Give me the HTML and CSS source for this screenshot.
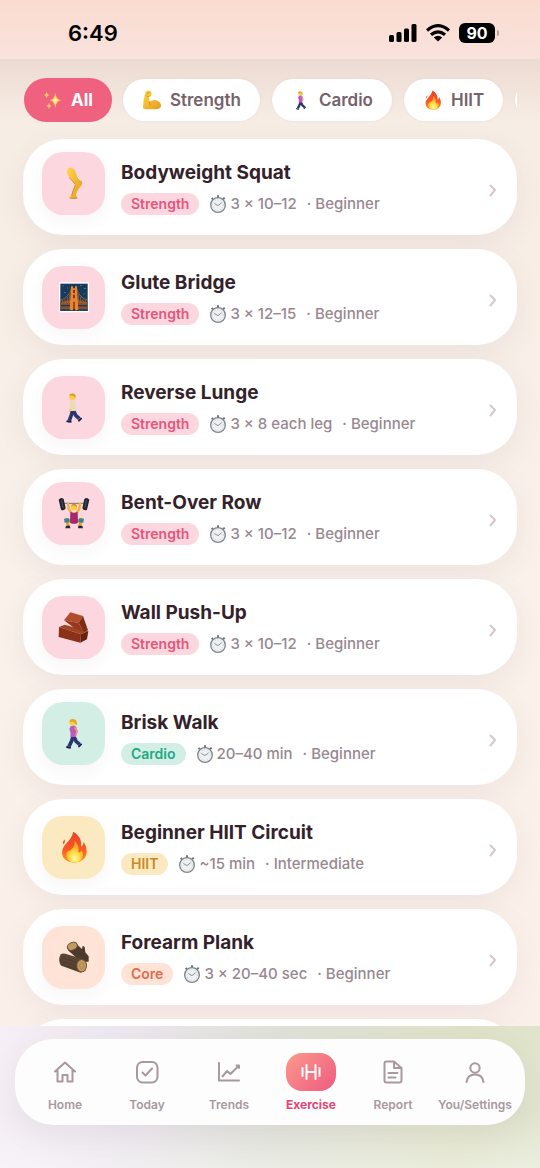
FILE: index.html
```html
<!DOCTYPE html>
<html lang="en">

<head>
    <meta charset="UTF-8">
    <meta name="viewport" content="width=device-width, initial-scale=1.0">
    <title>Exercise</title>
    <link rel="stylesheet" href="styles.css">
</head>

<body>
    <!-- shared icons -->
    <svg class="sprite" aria-hidden="true">
        <defs>
            <linearGradient id="skin" x1="0" y1="0" x2="1" y2="1">
                <stop offset="0" stop-color="#ffd84a" />
                <stop offset="1" stop-color="#e59a1c" />
            </linearGradient>
            <linearGradient id="flame" x1="0" y1="0" x2="0" y2="1">
                <stop offset="0" stop-color="#e8402a" />
                <stop offset=".6" stop-color="#fb5a24" />
                <stop offset="1" stop-color="#ff9a1f" />
            </linearGradient>
            <radialGradient id="glow" cx=".5" cy=".8" r=".6">
                <stop offset="0" stop-color="#fffbb0" />
                <stop offset=".5" stop-color="#ffdc3c" />
                <stop offset="1" stop-color="#ff9d2a" />
            </radialGradient>
        </defs>
        <symbol id="spark" viewBox="0 0 60 60">
            <path fill="#ffd45a" d="M37 8Q39 28 54 31Q39 34 37 54Q34 34 20 31Q34 28 37 8Z" />
            <path fill="#ffc46a" d="M11 5Q12 13 19 15Q12 17 11 25Q9 17 3 15Q9 13 11 5ZM18 38Q19 46 26 48Q19 50 18 57Q17 50 10 48Q17 46 18 38Z" />
            <path fill="#fff0a8" d="M37 20Q38 29 46 31Q38 33 37 42Q36 33 28 31Q36 29 37 20Z" />
        </symbol>
        <symbol id="arm" viewBox="0 0 60 60">
            <path fill="url(#skin)" d="M11 5Q18 -1 26 4Q31 9 27 17Q22 22 20 19Q21 28 23 35Q33 27 43 31Q58 36 57 49Q55 58 40 58L10 58Q2 58 3 50Q4 25 11 5Z" />
            <path fill="none" stroke="#c98313" stroke-width="2.5" stroke-linecap="round" d="M15 10Q20 12 22 7M21 20Q15 22 13 17M23 36Q21 42 25 45" />
        </symbol>
        <symbol id="woman" viewBox="0 0 96 96">
            <path fill="none" stroke="#2c3470" stroke-width="11" stroke-linejoin="round" d="M46 56L41 72L33 88M47 57L55 74L65 82" />
            <path stroke="#1d2148" stroke-width="6" stroke-linecap="round" d="M27 90L36 92M63 88L69 82" />
            <path fill="#b75cb8" d="M38 28Q50 22 56 32L54 60L37 60Q39 45 34 36Z" />
            <path fill="none" stroke="#f58d98" stroke-width="5" stroke-linecap="round" stroke-linejoin="round" d="M51 33L58 43L54 54" />
            <circle cx="43" cy="17" r="9" fill="#ffcf3f" />
            <path fill="#e9a51e" d="M34 12Q38 3 49 7Q58 11 57 23Q50 25 49 15L35 14Z" />
        </symbol>
        <symbol id="man" viewBox="0 0 96 96">
            <path fill="none" stroke="#2c3470" stroke-width="11" stroke-linejoin="round" d="M44 58L40 72L34 89M46 58L53 73L64 83" />
            <path stroke="#171c40" stroke-width="6" stroke-linecap="round" d="M28 91L38 92M63 89L69 83" />
            <path fill="#eadcb4" d="M37 28Q48 24 53 34L53 60L36 60L34 42Z" />
            <path fill="none" stroke="#f2c34a" stroke-width="4" stroke-linecap="round" d="M38 55L35 61" />
            <circle cx="43" cy="18" r="9" fill="#ffc93c" />
            <path fill="#d99a1b" d="M33 13Q38 5 48 8Q55 11 52 21L47 14Z" />
        </symbol>
        <symbol id="fire" viewBox="0 0 96 96">
            <path fill="url(#flame)" d="M46 2Q42 20 26 36Q12 50 12 66Q14 92 48 95Q84 92 86 62Q86 46 77 32Q76 44 70 47Q72 16 46 2ZM20 25Q13 32 15 40Q23 36 20 25Z" />
            <path fill="url(#glow)" d="M50 30Q52 44 40 55Q31 64 31 58Q23 66 25 76Q30 94 49 94Q72 93 75 74Q76 65 71 58Q67 67 61 63Q66 44 50 30Z" />
        </symbol>
        <symbol id="leg" viewBox="0 0 96 96">
            <path fill="url(#skin)" d="M27 11Q31 0 42 2Q52 7 55 23Q59 37 71 43Q74 49 71 54Q59 66 54 81Q53 88 59 93Q48 97 33 94Q33 89 40 87Q44 71 52 54Q46 44 34 31Q25 20 27 11Z" />
            <path fill="none" stroke="#c27a12" stroke-width="2" stroke-linecap="round" d="M52 54Q44 71 41 86M34 32L50 50M38 94L56 94" />
        </symbol>
        <symbol id="bridge" viewBox="0 0 96 96">
            <rect x="3" y="4" width="90" height="90" fill="#fff" />
            <rect x="7" y="8" width="82" height="82" fill="#163a5c" />
            <path fill="#8a4f2c" d="M7 64L40 56L56 56L89 64V84H7Z" />
            <path fill="#163a5c" d="M9 72H38V76H9ZM58 72H87V76H58Z" />
            <path fill="none" stroke="#c8742c" stroke-width="2" d="M7 58Q32 50 42 21M54 21Q64 50 89 58M14 57V68M21 54V68M28 48V66M34 41V66M62 41V66M68 48V66M75 54V68M82 57V68" />
            <path fill="#ee8429" d="M39 16H45V22H51V16H57L61 88H51V62H45V88H35Z" />
            <path fill="#7c3a1b" d="M45 27H51V36H45ZM45 41H51V52H45Z" />
            <path fill="#254862" d="M7 84H34V90H7ZM62 84H89V90H62Z" />
            <path fill="#fff" d="M14 14h2v2h-2zM27 20h2v2h-2zM68 13h2v2h-2zM80 22h2v2h-2zM20 34h2v2h-2zM77 38h2v2h-2z" />
        </symbol>
        <symbol id="lifter" viewBox="0 0 96 96">
            <path stroke="#6d7780" stroke-width="3" d="M8 19L88 19" />
            <path fill="none" stroke="#f2b52e" stroke-width="7" stroke-linecap="round" stroke-linejoin="round" d="M30 20L32 36L40 47M66 20L64 36L56 47" />
            <path fill="none" stroke="#e0a025" stroke-width="9" stroke-linejoin="round" d="M43 75L26 67L31 88M53 75L70 67L65 88" />
            <path fill="#a5286f" d="M37 44Q48 50 59 44L60 77Q48 84 36 77Z" />
            <circle cx="48" cy="31" r="9" fill="#ffc63a" />
            <path fill="#d68e18" d="M39 28Q40 20 49 20Q58 22 57 30L48 25Z" />
            <path fill="#2f8795" d="M18 65L33 64L34 76L20 77ZM63 64L78 65L76 77L62 76Z" />
            <path fill="#20242e" d="M2 8Q9 -1 17 6L23 34Q18 43 9 38ZM94 8Q87 -1 79 6L73 34Q78 43 87 38Z" />
            <path fill="#4a5360" d="M9 9L12 8L17 33L14 34ZM87 9L84 8L79 33L82 34Z" />
            <path fill="#22283a" d="M22 94L24 86H36L37 94ZM60 94L61 86H73L75 94Z" />
        </symbol>
        <symbol id="brick" viewBox="0 0 96 96">
            <path fill="#a34426" d="M3 48L20 41L91 60L69 70Z" />
            <path fill="#8a3219" d="M3 48L69 70L67 95L2 78Z" />
            <path fill="#642310" d="M69 70L91 60L87 85L67 95Z" />
            <path fill="#b24b2b" d="M37 4L75 15L62 36L18 28Z" />
            <path fill="#7c2c15" d="M75 15L90 58L77 62L62 36Z" />
            <path fill="#96391d" d="M18 28L62 36L77 62L54 55Z" />
        </symbol>
        <symbol id="wood" viewBox="0 0 96 96">
            <path fill="#4e3a2d" d="M48 2L72 24L74 14L80 18L82 34L92 46V62L68 62L30 28Z" />
            <ellipse cx="43" cy="16" rx="17" ry="13" fill="#6a4a30" transform="rotate(-25 43 16)" />
            <ellipse cx="43" cy="16" rx="14" ry="10" fill="#c09a5e" transform="rotate(-25 43 16)" />
            <path fill="#594334" d="M8 40Q14 36 22 38L74 54Q88 62 86 76Q82 92 68 95L10 74Q2 66 4 50Z" />
            <path fill="none" stroke="#45342a" stroke-width="2" d="M10 49L55 64M7 59L54 76M12 70L58 88" />
            <ellipse cx="71" cy="74" rx="16" ry="20" fill="#7a5536" />
            <ellipse cx="71" cy="74" rx="13" ry="17" fill="#c49c63" />
            <ellipse cx="71" cy="74" rx="6" ry="9" fill="none" stroke="#a17a47" stroke-width="2" />
        </symbol>
        <symbol id="watch" viewBox="0 0 54 54">
            <path stroke="#68717a" stroke-width="6" d="M27 1V10M42 13L47 8M12 13L8 9" />
            <circle cx="27" cy="30" r="22" fill="#eef0f1" stroke="#7d868e" stroke-width="4" />
            <circle cx="27" cy="30" r="16" fill="none" stroke="#aab2b8" stroke-width="2" stroke-dasharray="2 6" />
            <path fill="none" stroke="#59636c" stroke-width="2" stroke-linecap="round" d="M17 26L27 32L37 24" />
        </symbol>
        <symbol id="chevron" viewBox="0 0 8 14">
            <path fill="none" stroke="#d8c6cc" stroke-width="2" stroke-linejoin="round" d="M1 2L6 7L1 13" />
        </symbol>
    </svg>

    <div class="app">
        <header class="status">
            <span class="time">6:49</span>
            <div class="signals">
                <svg width="28" height="18" viewBox="0 0 28 18">
                    <rect x="0" y="11" width="5" height="7" rx="1.5" />
                    <rect x="7.5" y="8" width="5" height="10" rx="1.5" />
                    <rect x="15" y="4.5" width="5" height="13.5" rx="1.5" />
                    <rect x="22.5" y="0" width="5" height="18" rx="1.5" />
                </svg>
                <svg width="24" height="18" viewBox="0 0 24 18">
                    <path fill="none" stroke="#000" stroke-width="3.2" d="M1 6.5Q12 -3.2 23 6.5M5 10.8Q12 4.8 19 10.8" />
                    <path d="M7.8 13.4Q12 10 16.2 13.4L12 17.6Z" />
                </svg>
                <span class="battery">90</span>
            </div>
        </header>

        <main class="content">
            <div class="chips">
                <button class="chip active"><svg class="chip-icon"><use href="#spark" /></svg>All</button>
                <button class="chip"><svg class="chip-icon"><use href="#arm" /></svg>Strength</button>
                <button class="chip"><svg class="chip-icon"><use href="#woman" /></svg>Cardio</button>
                <button class="chip"><svg class="chip-icon"><use href="#fire" /></svg>HIIT</button>
                <button class="chip" aria-label="Core"><svg class="chip-icon"><use href="#wood" /></svg></button>
            </div>

            <div class="list">
                <a class="card" href="#">
                    <div class="tile pink lifted"><svg class="emoji"><use href="#leg" /></svg></div>
                    <div class="info">
                        <h2 class="name">Bodyweight Squat</h2>
                        <div class="meta"><span class="tag pink">Strength</span><span class="amount"><svg class="watch"><use href="#watch" /></svg>3 × 10–12</span><span>· Beginner</span></div>
                    </div>
                    <svg class="chevron"><use href="#chevron" /></svg>
                </a>
                <a class="card" href="#">
                    <div class="tile pink"><svg class="emoji"><use href="#bridge" /></svg></div>
                    <div class="info">
                        <h2 class="name">Glute Bridge</h2>
                        <div class="meta"><span class="tag pink">Strength</span><span class="amount"><svg class="watch"><use href="#watch" /></svg>3 × 12–15</span><span>· Beginner</span></div>
                    </div>
                    <svg class="chevron"><use href="#chevron" /></svg>
                </a>
                <a class="card" href="#">
                    <div class="tile pink"><svg class="emoji"><use href="#man" /></svg></div>
                    <div class="info">
                        <h2 class="name">Reverse Lunge</h2>
                        <div class="meta"><span class="tag pink">Strength</span><span class="amount"><svg class="watch"><use href="#watch" /></svg>3 × 8 each leg</span><span>· Beginner</span></div>
                    </div>
                    <svg class="chevron"><use href="#chevron" /></svg>
                </a>
                <a class="card" href="#">
                    <div class="tile pink lifted"><svg class="emoji"><use href="#lifter" /></svg></div>
                    <div class="info">
                        <h2 class="name">Bent-Over Row</h2>
                        <div class="meta"><span class="tag pink">Strength</span><span class="amount"><svg class="watch"><use href="#watch" /></svg>3 × 10–12</span><span>· Beginner</span></div>
                    </div>
                    <svg class="chevron"><use href="#chevron" /></svg>
                </a>
                <a class="card" href="#">
                    <div class="tile pink"><svg class="emoji"><use href="#brick" /></svg></div>
                    <div class="info">
                        <h2 class="name">Wall Push-Up</h2>
                        <div class="meta"><span class="tag pink">Strength</span><span class="amount"><svg class="watch"><use href="#watch" /></svg>3 × 10–12</span><span>· Beginner</span></div>
                    </div>
                    <svg class="chevron"><use href="#chevron" /></svg>
                </a>
                <a class="card" href="#">
                    <div class="tile green lifted"><svg class="emoji"><use href="#woman" /></svg></div>
                    <div class="info">
                        <h2 class="name">Brisk Walk</h2>
                        <div class="meta"><span class="tag green">Cardio</span><span class="amount"><svg class="watch"><use href="#watch" /></svg>20–40 min</span><span>· Beginner</span></div>
                    </div>
                    <svg class="chevron"><use href="#chevron" /></svg>
                </a>
                <a class="card" href="#">
                    <div class="tile yellow"><svg class="emoji"><use href="#fire" /></svg></div>
                    <div class="info">
                        <h2 class="name">Beginner HIIT Circuit</h2>
                        <div class="meta"><span class="tag yellow">HIIT</span><span class="amount"><svg class="watch"><use href="#watch" /></svg>~15 min</span><span>· Intermediate</span></div>
                    </div>
                    <svg class="chevron"><use href="#chevron" /></svg>
                </a>
                <a class="card" href="#">
                    <div class="tile orange"><svg class="emoji"><use href="#wood" /></svg></div>
                    <div class="info">
                        <h2 class="name">Forearm Plank</h2>
                        <div class="meta"><span class="tag orange">Core</span><span class="amount"><svg class="watch"><use href="#watch" /></svg>3 × 20–40 sec</span><span>· Beginner</span></div>
                    </div>
                    <svg class="chevron"><use href="#chevron" /></svg>
                </a>
                <div class="card"></div>
            </div>
        </main>

        <footer class="dock">
            <nav class="tabs">
                <a class="tab" href="#">
                    <span class="tab-icon"><svg viewBox="0 0 24 24"><path d="M2 11.5L12 2.5L22 11.5M4.5 10V21.5H9.5V15H14.5V21.5H19.5V10" /></svg></span>
                    Home
                </a>
                <a class="tab" href="#">
                    <span class="tab-icon"><svg viewBox="0 0 24 24"><rect x="2" y="2" width="20.5" height="20.5" rx="5.5" /><path d="M7.5 12.5L10.5 15.5L17 8.5" /></svg></span>
                    Today
                </a>
                <a class="tab" href="#">
                    <span class="tab-icon"><svg viewBox="0 0 24 24"><path d="M2 3V20.5H22M5.5 16.5L10 11L13.500 14L21.5 6M19.500 5.5H22V8" /></svg></span>
                    Trends
                </a>
                <a class="tab current" href="#">
                    <span class="tab-icon"><svg viewBox="0 0 24 24"><path d="M7.5 5V19M16.5 5V19M3.5 8V16M20.5 8V16M7.5 12H16.5" /></svg></span>
                    Exercise
                </a>
                <a class="tab" href="#">
                    <span class="tab-icon"><svg viewBox="0 0 24 24"><path d="M13 1.5H5.5Q3.5 1.5 3.5 3.5V20.5Q3.5 22.5 5.5 22.5H18.5Q20.5 22.5 20.5 20.5V8ZM13 1.5V8H20.5M7.5 13H16.5M7.5 17.5H14.5" /></svg></span>
                    Report
                </a>
                <a class="tab" href="#">
                    <span class="tab-icon"><svg viewBox="0 0 24 24"><circle cx="12" cy="8" r="4.7" /><path d="M3.5 22Q4.5 14.5 12 14.5Q19.5 14.5 20.5 22" /></svg></span>
                    You/Settings
                </a>
            </nav>
        </footer>
    </div>
</body>

</html>
```

FILE: styles.css
```css
html,
body {
    margin: 0;
    height: 100%;
}

body {
    font-family: Inter, "Liberation Sans", sans-serif;
    color: #33222a;
}

.sprite {
    position: absolute;
    width: 0;
    height: 0;
}

.app {
    display: flex;
    flex-direction: column;
    height: 100vh;
    background: linear-gradient(#f7e3da 0, #f6ede4 130px, #f9f1ea 50%, #fbf0e9);
}

/* status bar */
.status {
    display: flex;
    align-items: center;
    justify-content: space-between;
    box-sizing: border-box;
    height: 59px;
    padding: 6px 45px 0 68px;
    background: linear-gradient(#fbdbd0, #f8e3dc);
    color: #000;
}

.time {
    font-size: 22px;
    font-weight: 600;
}

.signals {
    display: flex;
    align-items: center;
    gap: 9px;
}

.battery {
    position: relative;
    width: 36px;
    border-radius: 6px;
    background: #000;
    color: #fff;
    font-size: 16px;
    font-weight: 700;
    line-height: 20px;
    text-align: center;
}

.battery::after {
    content: "";
    position: absolute;
    right: -4px;
    top: 7px;
    width: 2px;
    height: 6px;
    border-radius: 0 2px 2px 0;
    background: #b3a09c;
}

/* list */
.content {
    flex: 1;
    min-height: 0;
    overflow-y: auto;
    scrollbar-width: none;
    padding: 0 23px;
    background: linear-gradient(rgba(180, 150, 150, .16), rgba(180, 150, 150, 0) 60px);
}

.chips {
    display: flex;
    gap: 12px;
    overflow: hidden;
    padding: 20px 0 18px 2px;
}

.chip {
    display: flex;
    flex: none;
    align-items: center;
    gap: 8px;
    height: 42px;
    padding: 0 19px;
    border: 0;
    border-radius: 21px;
    background: #fff;
    box-shadow: 0 0 2px rgba(200, 170, 200, .3);
    color: #75626a;
    font: inherit;
    font-size: 17px;
    font-weight: 600;
}

.chip.active {
    padding: 0 18px;
    background: #f0607f;
    box-shadow: 0 0 0 1px #f0607f;
    color: #fff;
    font-weight: 700;
}

.chip-icon {
    width: 20px;
    height: 20px;
}

.list {
    display: flex;
    flex-direction: column;
    gap: 14px;
}

.card {
    display: flex;
    align-items: center;
    box-sizing: border-box;
    min-height: 96px;
    padding: 0 20px 0 19px;
    border-radius: 40px;
    background: #fff;
    box-shadow: 0 8px 28px rgba(130, 80, 110, .08);
    color: inherit;
    text-decoration: none;
}

.tile {
    display: flex;
    align-items: center;
    justify-content: center;
    width: 63px;
    height: 63px;
    margin-right: 16px;
    border-radius: 21px;
    box-shadow: 0 6px 16px rgba(140, 80, 110, .06);
}

.lifted {
    margin-bottom: 8px;
}

.emoji {
    width: 32px;
    height: 32px;
}

.info {
    flex: 1;
}

.name {
    margin: 0 0 7px;
    font-size: 19px;
    font-weight: 700;
    line-height: 26px;
}

.meta {
    display: flex;
    align-items: center;
    gap: 10px;
    color: #988890;
    font-size: 15px;
    font-weight: 500;
    line-height: 22px;
    white-space: nowrap;
}

.tag {
    padding: 0 10px;
    border-radius: 11px;
    font-size: 14px;
    font-weight: 600;
}

.amount {
    display: flex;
    align-items: center;
    gap: 3px;
}

.watch {
    width: 18px;
    height: 18px;
}

.pink {
    background: #fdd7e0;
    color: #e4557b;
}

.green {
    background: #d3efe5;
    color: #22a884;
}

.yellow {
    background: #fbe9c2;
    color: #c98a1f;
}

.orange {
    background: #fee3d6;
    color: #dc6c4c;
}

.chevron {
    width: 8px;
    height: 14px;
    margin-top: 5px;
}

/* bottom tabs */
.dock {
    padding: 13px 15px 43px;
    background:
        linear-gradient(rgba(255, 255, 255, 0) 60%, rgba(255, 255, 255, .35)),
        linear-gradient(100deg, #f6eff5 0, #ece7ee 22%, #dfe1d8 50%, #dfe2c6 85%, #e0e5cf);
}

.tabs {
    display: flex;
    box-sizing: border-box;
    height: 86px;
    padding: 14px 9px 0;
    border-radius: 38px;
    background: #fefdfd;
    box-shadow: 0 10px 28px rgba(150, 120, 150, .1);
}

.tab {
    display: flex;
    flex: 1 1 0;
    min-width: 0;
    flex-direction: column;
    align-items: center;
    gap: 5px;
    color: #a8989f;
    font-size: 12px;
    font-weight: 600;
    line-height: 18px;
    text-decoration: none;
    white-space: nowrap;
}

.tab-icon {
    display: flex;
    align-items: center;
    justify-content: center;
    width: 50px;
    height: 38px;
    border-radius: 16px;
}

.tab-icon svg {
    width: 24px;
    height: 24px;
    fill: none;
    stroke: currentColor;
    stroke-width: 2;
    stroke-linecap: round;
    stroke-linejoin: round;
}

.tab.current {
    color: #e8436f;
    font-weight: 700;
}

.current .tab-icon {
    background: linear-gradient(135deg, #fb9a8b, #ef5a80);
    color: #fff;
}
```
